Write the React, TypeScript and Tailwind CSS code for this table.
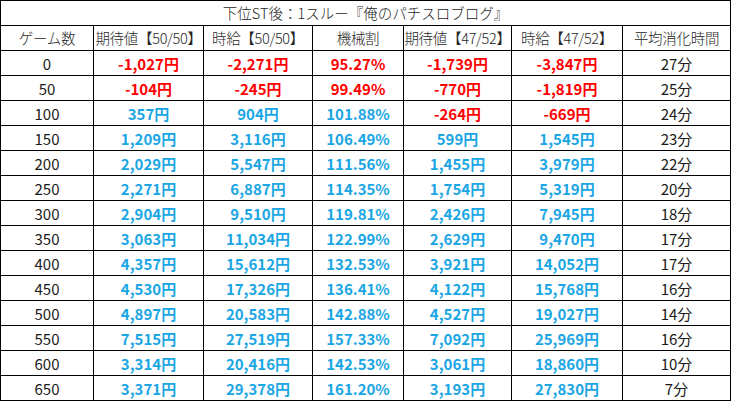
const rows: [string, string, string, string, string, string, string][] = [
  ["0", "-1,027円", "-2,271円", "95.27%", "-1,739円", "-3,847円", "27分"],
  ["50", "-104円", "-245円", "99.49%", "-770円", "-1,819円", "25分"],
  ["100", "357円", "904円", "101.88%", "-264円", "-669円", "24分"],
  ["150", "1,209円", "3,116円", "106.49%", "599円", "1,545円", "23分"],
  ["200", "2,029円", "5,547円", "111.56%", "1,455円", "3,979円", "22分"],
  ["250", "2,271円", "6,887円", "114.35%", "1,754円", "5,319円", "20分"],
  ["300", "2,904円", "9,510円", "119.81%", "2,426円", "7,945円", "18分"],
  ["350", "3,063円", "11,034円", "122.99%", "2,629円", "9,470円", "17分"],
  ["400", "4,357円", "15,612円", "132.53%", "3,921円", "14,052円", "17分"],
  ["450", "4,530円", "17,326円", "136.41%", "4,122円", "15,768円", "16分"],
  ["500", "4,897円", "20,583円", "142.88%", "4,527円", "19,027円", "14分"],
  ["550", "7,515円", "27,519円", "157.33%", "7,092円", "25,969円", "16分"],
  ["600", "3,314円", "20,416円", "142.53%", "3,061円", "18,860円", "10分"],
  ["650", "3,371円", "29,378円", "161.20%", "3,193円", "27,830円", "7分"],
];

const headers = [
  "ゲーム数",
  "期待値【50/50】",
  "時給【50/50】",
  "機械割",
  "期待値【47/52】",
  "時給【47/52】",
  "平均消化時間",
];

// red for losses and payout under 100%
function isLoss(value: string) {
  if (value.startsWith("-")) return true;
  if (value.endsWith("%")) return parseFloat(value) < 100;
  return false;
}

const cell = "flex h-[24px] items-center justify-center whitespace-nowrap bg-white";

export default function App() {
  return (
    <div
      className="w-[731px] bg-white text-[15px] leading-none text-[#1a1a1a]"
      style={{ fontFamily: '"Noto Sans CJK JP", "Noto Sans", sans-serif' }}
    >
      <div className="grid grid-cols-[92px_109px_108px_90px_107px_110px_107px] gap-px border border-black bg-black">
        <div className={`${cell} col-span-7 text-[14.5px] font-light text-[#262626]`}>
          下位ST後：1スルー『俺のパチスロブログ』
        </div>
        {headers.map((h) => (
          <div key={h} className={`${cell} overflow-visible text-[14.5px] font-light tracking-[-0.3px] text-[#262626]`}>
            {h}
          </div>
        ))}
        {rows.map((row) =>
          row.map((value, i) => {
            const plain = i === 0 || i === 6;
            const color = plain
              ? "text-[#1a1a1a]"
              : isLoss(value)
                ? "font-bold text-[#ff0000]"
                : "font-bold text-[#1aa6e4]";
            return (
              <div key={`${row[0]}-${i}`} className={`${cell} ${color}`}>
                {value}
              </div>
            );
          })
        )}
      </div>
    </div>
  );
}
